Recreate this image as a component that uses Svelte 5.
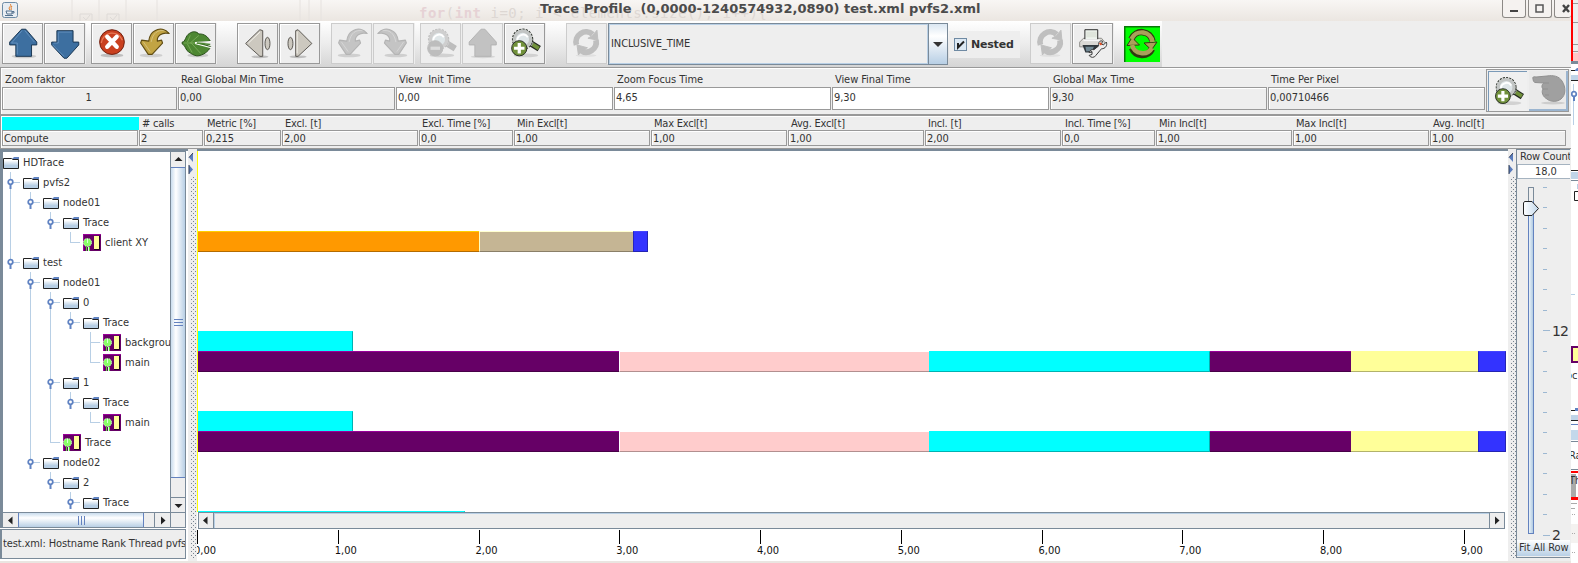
<script>
  const fields = [
    ['Zoom faktor', '1', 176, 'mid'],
    ['Real Global Min Time', '0,00', 218, ''],
    ['View  Init Time', '0,00', 218, 'edit'],
    ['Zoom Focus Time', '4,65', 218, 'edit'],
    ['View Final Time', '9,30', 218, 'edit'],
    ['Global Max Time', '9,30', 218, ''],
    ['Time Per Pixel', '0,00710466', 218, '']
  ];
  const stats = [
    ['', 'Compute', 137], ['# calls', '2', 65], ['Metric [%]', '0,215', 78], ['Excl. [t]', '2,00', 137],
    ['Excl. Time [%]', '0,0', 95], ['Min Excl[t]', '1,00', 137], ['Max Excl[t]', '1,00', 137], ['Avg. Excl[t]', '1,00', 137],
    ['Incl. [t]', '2,00', 137], ['Incl. Time [%]', '0,0', 94], ['Min Incl[t]', '1,00', 137], ['Max Incl[t]', '1,00', 137], ['Avg. Incl[t]', '1,00', 137]
  ];
  const nodes = [
    [0, 'HDTrace'], [1, 'pvfs2'], [2, 'node01'], [3, 'Trace'], [4, 'client XY', 1],
    [1, 'test'], [2, 'node01'], [3, '0'], [4, 'Trace'], [5, 'background', 1], [5, 'main', 1],
    [3, '1'], [4, 'Trace'], [5, 'main', 1], [3, 'Trace', 1], [2, 'node02'], [3, '2'], [4, 'Trace']
  ];
  function continues(i, depth) {
    for (let j = i + 1; j < nodes.length; j++) {
      if (nodes[j][0] < depth) return false;
      if (nodes[j][0] === depth) return true;
    }
    return false;
  }
  const tree = nodes.map(([depth, label, leaf], i) => ({
    depth, label, leaf,
    guides: Array.from({ length: depth }, (_, k) => ({
      x: 7 + 20 * k,
      h: continues(i, k + 1) ? 20 : k + 1 === depth ? 10 : 0
    }))
  }));
  const full = [['purple', 421], ['pink', 310], ['cyan', 281], ['purple', 141], ['yellow', 127], ['blue', 28]];
  const rows = Array.from({ length: 19 }, () => []);
  rows[4] = [['orange', 281], ['tan', 154], ['blue', 15]];
  rows[9] = [['cyan', 155]];
  rows[10] = full;
  rows[13] = [['cyan', 155]];
  rows[14] = full;
  rows[18] = [['cyan', 267]];
  const ticks = [0, 1, 2, 3, 4, 5, 6, 7, 8, 9];
  const marks = Array.from({ length: 18 }, (_, i) => i);
</script>

{#snippet undo(c, e)}
  <ellipse cx="18" cy="33" rx="12" ry="2" fill="#000" opacity=".13" />
  <path d="M37 10C33 5 27 4 22 7C18 9 16 13 15.5 18L8 17L7 20L15 32L19 32L30 20L29 17L24.5 18C24 13 29 8 37 10Z" fill={c} stroke={e} stroke-width="1.2" stroke-linejoin="round" />
  <path d="M32 7C25 6 20 9 18 19M10 19L17 29" fill="none" stroke="#fff" opacity=".3" />
{/snippet}
{#snippet refresh(c)}
  <ellipse cx="20" cy="33" rx="11" ry="1.5" fill="#000" opacity=".06" />
  <path d="M10 22A10.5 10.5 0 0 1 27 11M30.500 17A10.5 10.5 0 0 1 14 27.500" fill="none" stroke={c} stroke-width="6" />
  <path d="M31.500 6.500L32.500 17L22 15L27 12ZM12 32.500L10.500 22L21.500 25L16 28Z" fill={c} stroke={c} stroke-linejoin="round" />
{/snippet}
{#snippet lens(c, g, e, plus)}
  <ellipse cx="22" cy="33" rx="13" ry="2" fill="#000" opacity=".12" />
  <path d="M25 19L36 26" stroke={e} stroke-width="6.5" />
  <path d="M29 21.5L35.5 25.5" stroke={g} stroke-width="4" />
  <path d="M25 19L29 21.5" stroke={c} stroke-width="4" />
  <circle cx="18.5" cy="16" r="9" fill="#dde4e6" stroke={e} stroke-width="4.4" stroke-dasharray="2 1" />
  <circle cx="18.5" cy="16" r="8.6" fill="#dfe6e8" stroke={c} stroke-width="3.6" />
  <path d="M13 18A6 6 0 0 1 24 14" stroke="#fff" stroke-width="2" fill="none" />
  <circle cx="15" cy="25.5" r="8" fill={g} stroke={e} stroke-width="1" />
  <path d={plus ? 'M9.5 25.5H20.5M15 20V31' : 'M10 25.5H20'} stroke={plus ? '#fff' : '#ddd'} stroke-width="3.4" />
{/snippet}
{#snippet grip()}
  <svg class="dots" width="8" height="411"><defs><pattern id="dots" width="4" height="4" patternUnits="userSpaceOnUse"><rect x="1" y="0" width="1" height="1" fill="#76828f" /><rect x="3" y="2" width="1" height="1" fill="#76828f" /></pattern></defs>
    <rect x="2" y="28" width="6" height="381" fill="url(#dots)" /><path d="M5 4V13L1 8.500ZM1 16V25L5 20.500Z" fill="#5a7cbd" /><path d="M5 4L1 8.500M1 16V25" stroke="#333e55" fill="none" /></svg>
{/snippet}

<div class="screen">
  <div class="window">
    <header>
      <svg class="cup" width="16" height="16" viewBox="0 0 16 16"><rect x=".5" y=".5" width="15" height="15" rx="2" fill="#e8edf2" stroke="#6d8ba5" /><path d="M8 2C11 4 5 5 8 8M10 4C8 6 10 6 9 8" stroke="#e47a22" fill="none" /><path d="M4 9H10V12H5ZM10 9.5H12V11H10M3 13.5H11" stroke="#54718d" fill="none" /></svg>
      <svg class="ghost" width="500" height="21"><path d="M63 0V21M90 0V21M117 0V21M148 0V21M291 0V21M300 0V21M312 0V21" stroke="#e6e2df" /><path d="M71 21V14H83V21M98 21V14H110V21M74 17L77 20L81 15M101 17L104 20L108 15" stroke="#dedad7" fill="none" /></svg>
      <span class="code"><b>for</b>(<b>int</b> i=0; i &lt; elements.size(); i++)&#123;</span>
      <h1>Trace Profile&nbsp; (0,0000-1240574932,0890) test.xml pvfs2.xml</h1>
      <div class="wb"><i><svg width="22" height="16"><path d="M7 11H15" stroke="#444" stroke-width="2" /></svg></i><i><svg width="22" height="16"><path d="M7 5H14V12H7Z" fill="none" stroke="#555" stroke-width="1.5" /></svg></i><i class="cut"><svg width="18" height="16"><path d="M8 5L14 12M14 5L8 12" stroke="#444" stroke-width="2.4" /></svg></i></div>
    </header>

    <div class="toolbar">
      <div class="group">
        <svg class="btn" viewBox="0 0 41 41"><ellipse cx="22" cy="34" rx="13" ry="2" fill="#000" opacity=".15" /><path d="M19.5 5.5H24L35.5 19V22H30V34H13.5V22H7V19Z" fill="#3d6fa0" stroke="#17344f" stroke-width="1" /><path d="M20 7L9 20H15V32M23 7L33 19" stroke="#7da6ce" fill="none" opacity=".6" /></svg>
        <svg class="btn" viewBox="0 0 41 41"><path d="M12.5 7H29.5V19H35.5V22L23 36H20L7 22V19H12.5Z" fill="#3d6fa0" stroke="#17344f" stroke-width="1" /><path d="M14 8.5H28M14 9V20H9M20 34L8 22" stroke="#7da6ce" fill="none" opacity=".6" /></svg>
        <em style:width="5px"></em>
        <svg class="btn" viewBox="0 0 41 41"><ellipse cx="21" cy="33" rx="12" ry="2" fill="#000" opacity=".2" /><circle cx="21" cy="19" r="13" fill="#c9401f" stroke="#6d1c0c" /><path d="M9.8 20A11.5 11.5 0 0 1 32 17" fill="none" stroke="#e77a58" stroke-width="1.3" /><path d="M16 13.5L26 24M26 13.5L16 24" stroke="#fff" stroke-width="4.500" stroke-linecap="round" /></svg>
        <svg class="btn" viewBox="0 0 41 41">{@render undo('#c2a443', '#5f4c13')}</svg>
        <svg class="btn" viewBox="0 0 41 41"><ellipse cx="23" cy="33" rx="11" ry="2" fill="#000" opacity=".15" /><path d="M6.500 19C10 19 10 12 14 10C18 7 22 8 24 10.500C30 10 34 14 36 18L24 19.500L36.500 24C34 29 28 33.500 22 33.500C18 33 16 31 13.500 29.500C10 28 10 22 6.500 21Z" fill="#4d8732" stroke="#264c16" /><path d="M8 20L30 20M15 20L24 12M16 20L26 31M12 19L15 12M12 21L17 30" stroke="#81b35f" stroke-width=".8" fill="none" /><path d="M20 19.500L37 18.500M20 20.500L37 25" stroke="#fff" stroke-width="1.2" /><path d="M22 20L36 21.500" stroke="#4d8732" stroke-width="1.500" /></svg>
        <em style:width="20px"></em>
        <svg class="btn" viewBox="0 0 41 41"><ellipse cx="23" cy="34.5" rx="9" ry="1.5" fill="#000" opacity=".2" /><path d="M8 20.5L23 6L26 7V34L23 34Z" fill="#ccc8bf" stroke="#55524d" stroke-linejoin="round" /><ellipse cx="31" cy="20.5" rx="2.6" ry="6.5" fill="#ccc8bf" stroke="#55524d" /><path d="M11 20L23 8.5" stroke="#f6f4ee" /></svg>
        <svg class="btn" viewBox="0 0 41 41"><ellipse cx="19" cy="34.5" rx="9" ry="1.5" fill="#000" opacity=".2" /><path d="M33.5 20.5L19 6L16.5 7V34L19 34Z" fill="#ccc8bf" stroke="#55524d" stroke-linejoin="round" /><ellipse cx="11" cy="20.5" rx="2.6" ry="6.5" fill="#ccc8bf" stroke="#55524d" /><path d="M18 8V31" stroke="#f6f4ee" /></svg>
        <em style:width="10px"></em>
        <svg class="btn off" viewBox="0 0 41 41">{@render undo('#c4c4c4', '#b4b4b4')}</svg>
        <svg class="btn off" viewBox="0 0 41 41"><g transform="translate(41 0) scale(-1 1)">{@render undo('#c4c4c4', '#b4b4b4')}</g></svg>
        <em style:width="5px"></em>
        <svg class="btn off" viewBox="0 0 41 41">{@render lens('#cfcfcf', '#bdbdbd', '#bcbcbc', false)}</svg>
        <svg class="btn off" viewBox="0 0 41 41"><ellipse cx="21" cy="34.5" rx="13" ry="1.5" fill="#000" opacity=".1" /><path d="M19 5.5H23L35 19V22H29.5V34H12.5V22H6.5V19Z" fill="#c2c2c2" stroke="#b2b2b2" /></svg>
        <svg class="btn" viewBox="0 0 41 41">{@render lens('#c2c5c4', '#71913b', '#252a22', true)}</svg>
        <em style:width="20px"></em>
        <svg class="btn off" viewBox="0 0 41 41">{@render refresh('#bfbfbf')}</svg>
        <div class="combo"><span>INCLUSIVE_TIME</span><b><svg width="18" height="39"><path d="M4 18H14L9 23Z" fill="#333" /></svg></b></div>
        <label class="nested"><svg width="13" height="13"><rect x=".5" y=".5" width="12" height="12" fill="#dce8f3" stroke="#6f8aa3" /><path d="M4 5V9.5L10 3.5" fill="none" stroke="#222" stroke-width="2" /></svg><span>Nested</span></label>
        <em style:width="9px"></em>
        <svg class="btn off" viewBox="0 0 41 41">{@render refresh('#bfbfbf')}</svg>
        <svg class="btn" viewBox="0 0 41 41"><path d="M7 19L11 15H30L34 20V24H7Z" fill="#dad9d5" stroke="#8c8b87" /><path d="M12.500 6H26V17H12.500Z" fill="#eef3ee" stroke="#222" /><path d="M14 8H25V14H14Z" fill="#dfe5dc" /><path d="M11 17H28" stroke="#f7f7f7" stroke-width="2" /><path d="M10 22H27V30H13Z" fill="#30383d" /><path d="M13 24H22L20 28L14 29Z" fill="#728994" /><path d="M35 19A5 5 0 0 1 30 26L24 33A4 4 0 0 1 17 33L20 32L20 29L17 30A4 4 0 0 1 22 27L27 23C26 19 29 17 31 18L30 21L32 22Z" fill="#eee" stroke="#333" /><path d="M28 20L30 22" stroke="#e14b20" stroke-width="2" /></svg>
        <svg class="green" viewBox="0 0 36 36"><path d="M.5 36V.5H36" fill="none" stroke="#087908" stroke-width="2" /><g stroke-linejoin="round"><path d="M7.500 13A11 11 0 0 1 28.500 15M28 23A11 11 0 0 1 8 22" fill="none" stroke="#303b10" stroke-width="6.500" /><path d="M33 16L27.500 24L20 17ZM3 19.500L8 11.500L15.500 19Z" fill="#aaa05a" stroke="#303b10" /><path d="M7.500 13A11 11 0 0 1 28.500 16M28 22A11 11 0 0 1 8 19" fill="none" stroke="#aaa05a" stroke-width="4.500" /></g></svg>
      </div>
    </div>

    <div class="times">
      <div class="cells">
        {#each fields as f}
          <div class="cell" style:width="{f[2]}px"><span class="cap">{f[0]}</span><span class="box {f[3]}">{f[1]}</span></div>
        {/each}
      </div>
      <div class="modes">
        <svg class="on" width="39" height="40" viewBox="0 0 41 41">{@render lens('#c2c5c4', '#71913b', '#252a22', true)}</svg>
        <svg class="hand" width="39" height="40"><ellipse cx="24" cy="32" rx="12" ry="1.500" fill="#000" opacity=".12" /><path d="M4 8Q3 5 7 6L18 5C24 4 30 5 33 10C37 16 37 24 32 28C27 32 20 30 18 28C14 26 12 21 14 18C12 16 13 13 15 12L6 11.500Q4 11 4 8Z" fill="#a0a0a0" stroke="#909090" /><path d="M15 12H20M14 18H19M16 24H20" stroke="#909090" /></svg>
      </div>
    </div>

    <div class="stats">
      {#each stats as s, i}
        <div class="scell" style:width="{s[2]}px"><span class="cap" class:swatch={i === 0}>{s[0]}</span><span class="box">{s[1]}</span></div>
      {/each}
    </div>

    <main>
      <aside>
        <div class="treebox">
          <div class="treetop">
            <div class="tree">
              {#each tree as n}
                <div class="node">
                  {#if n.depth}
                    <svg width={n.depth * 20} height="20" shape-rendering="crispEdges">
                      {#each n.guides as g}<rect x={g.x} y="0" width="1" height={g.h} fill="#b8cfe5" />{/each}
                      <rect x={n.depth * 20 - 13} y="10" width="10" height="1" fill="#b8cfe5" />
                      {#if !n.leaf}<g shape-rendering="auto"><circle cx={n.depth * 20 - 12.5} cy="10" r="2.3" fill="#fff" stroke="#5f82c2" stroke-width="1.7" /><rect x={n.depth * 20 - 13.5} y="12" width="2" height="5" fill="#5f82c2" /></g>{/if}
                    </svg>
                  {/if}
                  {#if n.leaf}
                    <svg width="18" height="17"><rect width="18" height="17" fill="#606" /><path d="M0 .5H18M.5 0V17" stroke="#909" /><path d="M11 2H16V15H11Z" fill="#ff9" /><path d="M16.500 2V15.500H11" stroke="#220022" fill="none" /><circle cx="4.500" cy="8.500" r="4" fill="#8f6" stroke="#d8fbd0" stroke-dasharray="1.500 1" /><path d="M4.500 5V9M3.500 13V17M5.500 13V17" stroke="#dfd" /><path d="M3.500 13V17M6.500 13V17" stroke="#5d3" /></svg>
                  {:else}
                    <svg width="16" height="13"><defs><linearGradient id="fold" x2="0" y2="1"><stop offset="0.2" stop-color="#fff" /><stop offset="0.7" stop-color="#b8cfe5" /></linearGradient></defs><path d="M.5 2.500H8.500L10 3.500H15.500V12.500H.5Z" fill="url(#fold)" stroke="#222" /><path d="M9 3L11 1H16V3Z" fill="#5f82c2" /></svg>
                  {/if}
                  <span class:lt={n.leaf}>{n.label}</span>
                </div>
              {/each}
            </div>
            <div class="vbar"><b><svg width="15" height="15"><path d="M3.500 9H11.500L7.500 5Z" fill="#222" /></svg></b><i><svg width="9" height="7"><path d="M0 .5H9M0 3.500H9M0 6.500H9" stroke="#6382bf" /></svg></i><u></u><b class="dn"><svg width="15" height="15"><path d="M3.500 6H11.500L7.500 10Z" fill="#222" /></svg></b></div>
          </div>
          <div class="hbar"><b><svg width="15" height="15"><path d="M9.500 3.500V11.500L5 7.500Z" fill="#222" /></svg></b><i><svg width="7" height="9"><path d="M.5 0V9M3.500 0V9M6.500 0V9" stroke="#6382bf" /></svg></i><u></u><b><svg width="15" height="15"><path d="M6 3.500V11.500L10.500 7.500Z" fill="#222" /></svg></b><s></s></div>
        </div>
        <div class="info"><span>test.xml: Hostname Rank Thread pvfs</span></div>
      </aside>
      <div class="split">{@render grip()}</div>
      <section>
        <div class="chart">
          {#each rows as r}
            <div class="row">{#each r as b}<div class="bar {b[0]}" style:width="{b[1]}px"></div>{/each}</div>
          {/each}
        </div>
        <div class="cbar"><b><svg width="13" height="14"><path d="M8.500 3.500V11.500L4 7.500Z" fill="#222" /></svg></b><i></i><b><svg width="13" height="14"><path d="M5 3.500V11.500L9.500 7.500Z" fill="#222" /></svg></b></div>
        <div class="axis">{#each ticks as t}<div class="tick"><span>{t},00</span></div>{/each}</div>
      </section>
      <div class="split r">{@render grip()}</div>
      <div class="zoomer">
        <div class="rc">Row Count</div>
        <div class="val">18,0</div>
        <svg width="53" height="361" class="slider">
          <defs><linearGradient id="tr"><stop offset="0" stop-color="#f2f7fb" /><stop offset="1" stop-color="#a9c6df" /></linearGradient><linearGradient id="th"><stop offset="0" stop-color="#fff" /><stop offset="1" stop-color="#c1d7eb" /></linearGradient></defs>
          <rect x="11.500" y="8.500" width="5" height="346" fill="url(#tr)" stroke="#6382bf" /><path d="M11.500 22V8.500H16.500V22" fill="#eee" stroke="#7a8a99" />
          <path d="M7.500 22.500H15L21.500 29.500L15 36.500H7.500L6.500 35V24Z" fill="url(#th)" stroke="#222" />
          {#each marks as m}<rect x="26" y={Math.round(8 + m * 20.450)} width={m === 7 || m === 17 ? 7 : 4} height="1" fill="#9db8d2" />{/each}
          <text x="35" y="157">12</text><text x="35" y="361">2</text>
        </svg>
        <div class="fit">Fit All Row</div>
      </div>
    </main>
    <footer></footer>
  </div>

  <svg class="behind" width="7" height="563">
    <rect width="7" height="61" fill="#eee" /><path d="M0 3.500H7M0 22.500H7M0 44.500H7M0 51.500H7" stroke="#999" /><rect y="53" width="7" height="8" fill="#ffc8c8" /><rect width="2" height="61" fill="#f00" />
    <rect y="61" width="7" height="3" fill="#7a8a99" /><path d="M0 70.500H7M0 80.500H7" stroke="#222" /><path d="M4 70L6 68H7V71H4Z" fill="#5f82c2" /><rect y="75" width="7" height="5" fill="#bfd4e8" />
    <path d="M2.500 84V125" stroke="#b8cfe5" /><circle cx="3" cy="94" r="2.300" fill="#fff" stroke="#5f82c2" stroke-width="1.700" /><path d="M3 96V101" stroke="#5f82c2" stroke-width="2" />
    <path d="M0 170.500H7" stroke="#222" /><rect y="172" width="7" height="7" fill="#bfd4e8" /><path d="M0 180.500H7" stroke="#7a8a99" /><path d="M7 191.500H3.500V200.500H7" fill="none" stroke="#222" /><path d="M6.500 184V189M0 294.500H4" stroke="#b8cfe5" />
    <rect y="346" width="7" height="17" fill="#606" /><rect x="2" y="348" width="5" height="13" fill="#ff9" /><text x="-5" y="379">oc</text>
    <path d="M0 410.500H7M0 420.500H7" stroke="#222" /><rect x="4" y="408" width="3" height="3" fill="#5f82c2" /><rect y="415" width="7" height="5" fill="#bfd4e8" /><path d="M0 424.500H7" stroke="#6382bf" /><rect y="430" width="7" height="10" fill="#c3d8eb" /><path d="M0 441.500H7M0 469.500H7" stroke="#7a8a99" />
    <text x="-2" y="459">Ra</text><rect y="474" width="5" height="23" fill="#aaa" /><text x="-2" y="484">Th</text><rect y="471" width="7" height="2" fill="#f00" /><rect y="497" width="7" height="3" fill="#f00" /><path d="M0 503.500H6M0 508.500H4" stroke="#aaa" /><rect y="524" width="7" height="19" fill="#f4f2f0" /><path d="M1 514.500H5M1 533.500H5M1 552.500H5" stroke="#aaa" stroke-dasharray="1 1" />
  </svg>
</div>

<style>
  :global(body) { background: #fff; }
  .screen { display: flex; width: 1578px; height: 563px; overflow: hidden; font: 11px/13px "DejaVu Sans Condensed", "DejaVu Sans", sans-serif; font-stretch: condensed; letter-spacing: -0.080px; color: #333; }
  .screen :is(div, span, header, h1, i, b, u, s, em, label) { box-sizing: border-box; }
  .screen svg { display: block; flex: none; }
  .screen :is(i, b, u, s, em) { font-style: normal; text-decoration: none; }
  .window { width: 1571px; height: 563px; background: #eee; display: flex; flex-direction: column; overflow: hidden; }
  .behind text { font-size: 11px; fill: #333; }
  header { height: 21px; flex: none; background: linear-gradient(#f8f6f4, #ebe6e1); position: relative; display: flex; align-items: flex-start; padding: 2px 0 0 2px; }
  .ghost { position: absolute; left: 9px; top: 0; }
  .code { position: absolute; left: 419px; top: 5px; font: 14px/16px "DejaVu Sans Mono", monospace; letter-spacing: 0.500px; color: #ddd7d3; white-space: pre; }
  .code b { color: #e6d2d5; }
  h1 { position: relative; margin: -1px 0 0 522px; width: 960px; flex: none; font: bold 13px/15px "DejaVu Sans", sans-serif; letter-spacing: 0; color: #4b4b4b; white-space: pre; }
  .wb { display: flex; gap: 2px; margin: -2px 0 0 2px; position: relative; flex: none; }
  .wb i { width: 24px; height: 18px; border: 1px solid #8c8986; border-top: 0; border-radius: 0 0 3px 3px; background: #f5f2f0; }
  .wb .cut { width: 17px; border-right: 0; overflow: hidden; }
  .toolbar { height: 46px; flex: none; width: 1162px; background: linear-gradient(#fff, #ececec 50%, #d5d5d5); }
  .group { display: flex; padding: 2px 0 0 2px; gap: 1px; }
  .btn { width: 41px; height: 41px; box-sizing: border-box; border: 1px solid #999; background: #eee; box-shadow: inset 1px 1px #fff, 1px 0 #eee; }
  .btn.off { border-color: #ccc; box-shadow: 1px 0 #eee; }
  em { flex: none; margin-right: -1px; }
  .combo { display: flex; width: 340px; flex: none; height: 42px; border: 1px solid #7a8a99; background: #eee; }
  .combo span { flex: 1; padding: 13px 0 0 2px; box-shadow: inset 0 0 0 1px #b8cfe5; }
  .combo b { width: 19px; border-left: 1px solid #7a8a99; background: linear-gradient(#dbe7f2, #fff 30%, #b8cfe5); }
  .nested { display: flex; align-items: center; width: 71px; flex: none; height: 27px; margin-top: 8px; background: #eee; padding-left: 5px; gap: 4px; font: bold 11px "DejaVu Sans", sans-serif; letter-spacing: -0.200px; }
  .green { width: 36px; height: 36px; background: #0f0; margin: 3px 0 0 10px; }
  .times { height: 48px; flex: none; border: solid #999; border-width: 1px 0 1px 1px; box-shadow: inset 1px 1px #fff, 0 1px #fff; display: flex; }
  .cells { display: flex; width: 1485px; flex: none; padding: 3px 0 0 1px; }
  .cell, .scell { display: flex; flex-direction: column; flex: none; }
  .cap { padding-left: 3px; height: 15px; line-height: 15px; white-space: pre; }
  .box { height: 23px; border: 1px solid #999; line-height: 21px; padding-left: 1px; margin-right: 1px; box-shadow: inset 1px 1px #fff; white-space: pre; }
  .box.mid { text-align: center; padding-right: 3px; }
  .edit { background: #fff; }
  .modes { display: flex; width: 83px; height: 43px; border: 1px solid #999; padding: 1px; margin-top: 1px; gap: 2px; flex: none; }
  .on { background: #f0f0f0; border: solid #7a99b7; border-width: 1px 0 0 1px; box-sizing: border-box; }
  .hand { background: #eaeaea; border: solid #9bb5d0; border-width: 0 2px 2px 0; box-sizing: border-box; }
  .cells .cap { height: 16px; line-height: 17px; }
  .cells .box { line-height: 20px; }
  .stats { height: 34px; flex: none; border: solid #999; border-width: 1px 0 1px 1px; box-shadow: inset 1px 1px #fff; display: flex; padding: 1px 0 0 1px; }
  .stats .cap { height: 13px; line-height: 13px; letter-spacing: -0.200px; }
  .stats .box { height: 16px; line-height: 15px; }
  .stats .swatch { background: #0ff; }
  main { display: flex; height: 412px; flex: none; }
  aside { width: 188px; flex: none; padding-right: 2px; background: #fff; border-top: 2px solid #7a8a99; box-sizing: border-box; }
  .treebox { border: solid #7a8a99; border-width: 1px 1px 1px 3px; height: 377px; background: #fff; }
  .treetop { display: flex; height: 360px; }
  .tree { width: 167px; overflow: hidden; }
  .node { height: 20px; display: flex; align-items: center; }
  .node span { margin-left: 4px; white-space: nowrap; line-height: 21px; letter-spacing: 0; }
  .node .lt { margin-left: 4px; }
  .vbar { width: 15px; flex: none; border-left: 1px solid #7a8a99; display: flex; flex-direction: column; }
  .vbar b { height: 15px; background: #eee; }
  .vbar .dn { border-top: 1px solid #7a8a99; }
  .vbar i { height: 311px; border: solid #6382bf; border-width: 1px 0 1px 0; background: linear-gradient(90deg, #c9dced, #fff 35%, #b8cfe5); display: grid; place-items: center; }
  .vbar u { flex: 1; background: #eee; }
  .hbar { height: 15px; display: flex; border-top: 1px solid #7a8a99; background: #eee; }
  .hbar b { width: 15px; }
  .hbar i { width: 126px; border: solid #6382bf; border-width: 0 1px; background: linear-gradient(#c9dced, #fff 35%, #b8cfe5); display: grid; place-items: center; }
  .hbar u { width: 11px; border-right: 1px solid #7a8a99; }
  .hbar s { flex: 1; border-left: 1px solid #7a8a99; }
  .info { height: 30px; margin-top: 1px; border: 1px solid #7a8a99; border-width: 1px 1px 1px 2px; background: #eee; overflow: hidden; padding: 7px 0 0 1px; white-space: nowrap; letter-spacing: -0.110px; }
  .split { width: 9px; flex: none; background: #eee; overflow: hidden; }
  .split.r { width: 8px; }
  section { width: 1311px; flex: none; background: #fff; border-top: 2px solid #7a8a99; box-sizing: border-box; overflow: hidden; }
  .chart { height: 361px; border-left: 1px solid #ff0; overflow: hidden; }
  .row { height: 20px; display: flex; width: 1309px; }
  .bar { height: 21px; flex: none; border: 1px solid; border-right-width: 0; border-left-width: 0; position: relative; }
  .orange { background: #f90; border-color: #ffd000 #b36b00 #b36b00; }
  .tan { background: #c5b594; border-color: #ffffd0 #8a7f68 #8a7f68; border-left: 1px solid #ffffc0; }
  .blue { background: #33f; border-color: #44f #2424b2 #2424b2 #2424c2; border-left-width: 1px; border-right-width: 1px; }
  .cyan { background: #0ff; border-color: #0ff #00b2b2 #00b2b2; border-right-width: 1px; }
  .purple { background: #606; border-color: #909 #470047 #470047; }
  .pink { background: #fcc; border-color: #fff #b28f8f #b28f8f; border-left: 1px solid #fff; }
  .yellow { background: #ff9; border-color: #ff9 #b2b26b #b2b26b; }
  .cbar { height: 17px; margin: 0 3px 0 1px; display: flex; border: 1px solid #7a8a99; background: #eee; }
  .cbar b { width: 14px; }
  .cbar i { flex: 1; border: solid #7a8a99; border-width: 0 1px; box-shadow: inset 0 1px #b8cfe5, inset 1px 0 #b8cfe5; }
  .axis { height: 31px; display: flex; color: #111; letter-spacing: 0; }
  .tick { width: 140.750px; flex: none; height: 12px; margin-top: 1px; border-left: 1px solid #000; padding-top: 14px; }
  .axis .tick { background: linear-gradient(#fff, #fff); height: 11px; }
  .tick span { display: block; margin-left: -4px; }
  .zoomer { width: 54px; flex: none; border-left: 1px solid #7a8a99; border-top: 1px solid #7a8a99; height: 409px; border-bottom: 1px solid #7a8a99; overflow: hidden; white-space: nowrap; }
  .rc { height: 14px; padding-left: 3px; line-height: 13px; letter-spacing: -0.200px; }
  .val { height: 15px; background: #fff; border: 1px solid #a5b3c0; border-right: 0; padding-left: 17px; line-height: 14px; }
  .slider text { font: 14px "DejaVu Sans", sans-serif; letter-spacing: -0.800px; fill: #333; }
  .slider { overflow: visible; }
  .fit { height: 16px; background: linear-gradient(#fff, #b8cfe5); padding-left: 2px; line-height: 16px; letter-spacing: -0.100px; }
  footer { height: 2px; background: #eae5e1; }
</style>
